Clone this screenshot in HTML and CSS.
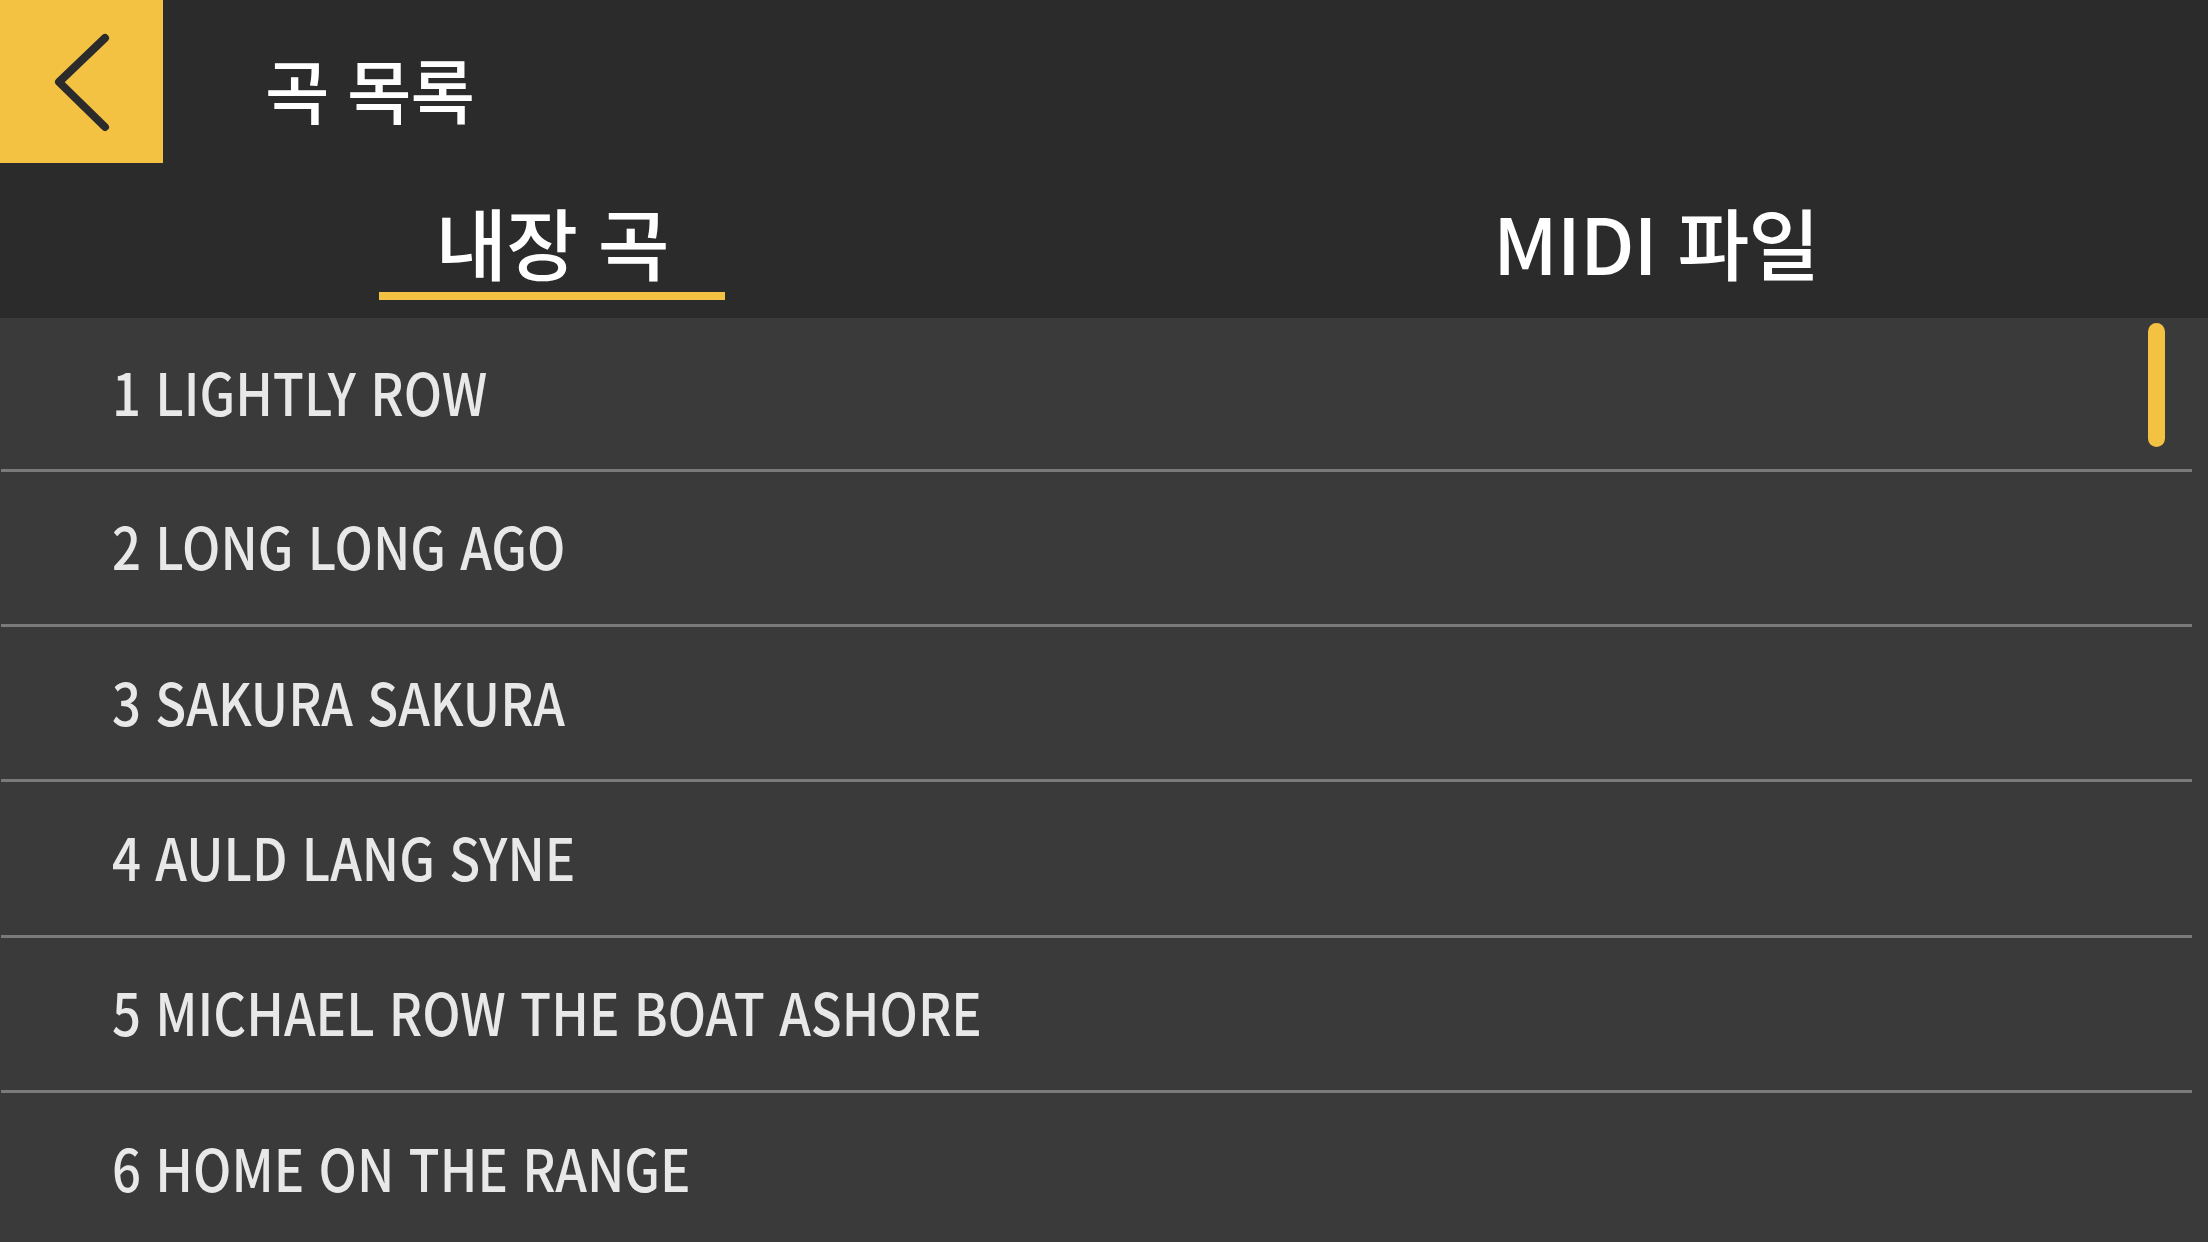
FILE: index.html
```html
<!DOCTYPE html>
<html lang="ko">
<head>
<meta charset="utf-8">
<title>곡 목록</title>
<link rel="stylesheet" href="styles.css">
</head>
<body>
<div class="app">
  <header class="header">
    <div class="topbar">
      <button class="back" aria-label="뒤로">
        <svg width="163" height="163" viewBox="0 0 163 163">
          <polyline points="105,38 59,82 105,127" fill="none" stroke="#2b2b2b" stroke-width="8" stroke-linecap="round" stroke-linejoin="round"/>
        </svg>
      </button>
      <h1 class="title">곡 목록</h1>
    </div>
    <nav class="tabs">
      <div class="tab active"><span class="tab-label">내장 곡</span></div>
      <div class="tab"><span class="tab-label">MIDI 파일</span></div>
    </nav>
  </header>
  <main class="list">
    <div class="row"><span class="song">1 LIGHTLY ROW</span></div>
    <div class="row"><span class="song">2 LONG LONG AGO</span></div>
    <div class="row"><span class="song">3 SAKURA SAKURA</span></div>
    <div class="row"><span class="song">4 AULD LANG SYNE</span></div>
    <div class="row"><span class="song">5 MICHAEL ROW THE BOAT ASHORE</span></div>
    <div class="row"><span class="song">6 HOME ON THE RANGE</span></div>
    <div class="scrollbar"></div>
  </main>
</div>
</body>
</html>
```

FILE: styles.css
```css
html, body {
  margin: 0;
  padding: 0;
  background: #3a3a3a;
  overflow: hidden;
}
body {
  width: 2208px;
  height: 1242px;
  font-family: "Noto Sans CJK KR", "Noto Sans", sans-serif;
}
.app {
  display: flex;
  flex-direction: column;
  height: 1242px;
}
.header {
  background: #2b2b2b;
  height: 318px;
  display: flex;
  flex-direction: column;
}
.topbar {
  height: 163px;
  display: flex;
  align-items: center;
}
.back {
  width: 163px;
  height: 163px;
  background: #f4c242;
  border: 0;
  padding: 0;
  margin: 0;
  display: block;
}
.back svg { display: block; }
.title {
  margin: 0 0 0 102px;
  padding-top: 14px;
  font-size: 70px;
  font-weight: 500;
  color: #ffffff;
  letter-spacing: -1px;
}
.tabs {
  flex: 1;
  display: grid;
  grid-template-columns: 1104px 1104px;
}
.tab {
  display: flex;
  justify-content: center;
  align-items: flex-end;
  padding-bottom: 18px;
}
.tab-label {
  display: block;
  font-size: 78px;
  font-weight: 500;
  color: #ffffff;
  line-height: 1;
  padding: 0 0 12px;
  border-bottom: 8px solid transparent;
  letter-spacing: -1px;
}
.tab.active .tab-label {
  border-bottom-color: #f4c242;
  padding-left: 56px;
  padding-right: 56px;
}
.list {
  flex: 1;
  position: relative;
  overflow: hidden;
  background: #3a3a3a;
}
.row {
  box-sizing: border-box;
  height: 155.4px;
  margin-left: 1px;
  width: 2191px;
  border-bottom: 3px solid #7a7a7a;
  display: flex;
  align-items: center;
  padding-left: 111px;
  padding-bottom: 5px;
}
.row:first-child {
  height: 153.5px;
}
.song {
  display: block;
  font-size: 58px;
  font-weight: 500;
  color: #e8e8e8;
  white-space: nowrap;
  transform: scaleX(0.878);
  transform-origin: left center;
}
.scrollbar {
  position: absolute;
  left: 2148px;
  top: 5px;
  width: 17px;
  height: 124px;
  border-radius: 9px;
  background: #f4c242;
}
```
